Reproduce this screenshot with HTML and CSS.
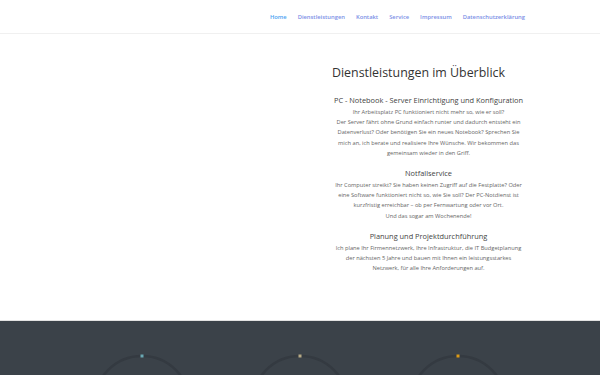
FILE: index.html
```html
<!DOCTYPE html>
<html lang="de">
<head>
  <meta charset="utf-8" />
  <meta name="viewport" content="width=device-width, initial-scale=1" />
  <title>Dienstleistungen</title>
  <link rel="stylesheet" href="styles.css">
</head>
<body>
  <header class="top">
    <nav class="menu">
      <a class="active" href="#">Home</a>
      <a href="#">Dienstleistungen</a>
      <a href="#">Kontakt</a>
      <a href="#">Service</a>
      <a href="#">Impressum</a>
      <a href="#">Datenschutzerklärung</a>
    </nav>
  </header>

  <section class="services">
    <div class="spacer"></div>
    <div class="col">
      <h1>Dienstleistungen im Überblick</h1>

      <h3>PC - Notebook - Server Einrichtigung und Konfiguration</h3>
      <p>Ihr Arbeitsplatz PC funktioniert nicht mehr so, wie er soll?<br>
        Der Server fährt ohne Grund einfach runter und dadurch entsteht ein Datenverlust? Oder benötigen Sie ein neues Notebook? Sprechen Sie mich an, ich berate und realisiere Ihre Wünsche. Wir bekommen das gemeinsam wieder in den Griff.</p>

      <h3>Notfallservice</h3>
      <p>Ihr Computer streikt? Sie haben keinen Zugriff auf die Festplatte? Oder eine Software funktioniert nicht so, wie Sie soll? Der PC-Notdienst ist kurzfristig erreichbar – ob per Fernwartung oder vor Ort.<br>
        Und das sogar am Wochenende!</p>

      <h3>Planung und Projektdurchführung</h3>
      <p>Ich plane Ihr Firmennetzwerk, Ihre Infrastruktur, die IT Budgetplanung der nächsten 5 Jahre und bauen mit Ihnen ein leistungsstarkes Netzwerk, für alle Ihre Anforderungen auf.</p>
    </div>
  </section>

  <section class="counters">
    <div class="counter">
      <svg width="100" height="100" viewBox="0 0 100 100">
        <circle cx="50" cy="50" r="48" class="track" />
        <rect x="48.5" y="0.5" width="3" height="3" fill="#6aa8b3" />
      </svg>
    </div>
    <div class="counter">
      <svg width="100" height="100" viewBox="0 0 100 100">
        <circle cx="50" cy="50" r="48" class="track" />
        <rect x="48.5" y="0.5" width="3" height="3" fill="#b7aa86" />
      </svg>
    </div>
    <div class="counter">
      <svg width="100" height="100" viewBox="0 0 100 100">
        <circle cx="50" cy="50" r="48" class="track" />
        <rect x="48.5" y="0.5" width="3" height="3" fill="#dc9a16" />
      </svg>
    </div>
  </section>
</body>
</html>
```

FILE: styles.css
```css
body {
  font-family: "Open Sans", "DejaVu Sans", sans-serif;
  background: #ffffff;
  margin: 0;
  color: #666;
}
.top {
  height: 33px;
  border-bottom: 1px solid #f0f0f0;
  display: flex;
  align-items: center;
  justify-content: flex-end;
  padding-right: 75px;
}
.menu {
  display: flex;
  gap: 11px;
}
.menu a {
  font-size: 5.8px;
  font-weight: 600;
  color: #7b8fe6;
  text-decoration: none;
}
.menu a.active {
  color: #4aa3f2;
}
.services {
  display: grid;
  grid-template-columns: 1fr 193px;
  column-gap: 79px;
  padding: 30px 75px 0 60px;
  height: 256px;
}
.col {
  text-align: center;
}
.col h1 {
  text-align: left;
  font-size: 12.4px;
  font-weight: 400;
  color: #333;
  margin: 0 0 13px;
  line-height: 18px;
}
.col h3 {
  font-size: 7.4px;
  font-weight: 400;
  color: #444;
  margin: 0 0 2px;
  line-height: 10px;
}
.col p {
  font-size: 5.7px;
  line-height: 10.2px;
  margin: 0 0 10px;
}
.counters {
  border-top: 1px solid #e2e2e2;
  background: #3b4249;
  display: grid;
  grid-template-columns: repeat(3, 158px);
  justify-content: center;
  padding-top: 33px;
  height: 100px;
}
.counter {
  display: flex;
  justify-content: center;
}
.track {
  fill: none;
  stroke: #343a41;
  stroke-width: 2.5;
}
```
